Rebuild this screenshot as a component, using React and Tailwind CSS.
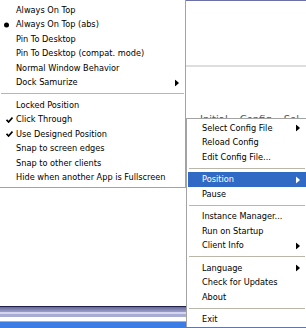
import React from 'react';

const Arrow = () => (
    <svg width="4" height="7" viewBox="0 0 4 7" className="absolute right-[6px] top-1/2 -translate-y-1/2">
        <path d="M0 0 L4 3.5 L0 7 Z" fill="currentColor" />
    </svg>
);

const Check = () => (
    <svg width="7" height="7" viewBox="0 0 7 7" className="absolute left-[6px] top-1/2 -translate-y-1/2">
        <path d="M0.5 3.2 L2.6 5.5 L6.5 1" fill="none" stroke="#000" strokeWidth="1.7" />
    </svg>
);

const Bullet = () => (
    <span className="absolute left-[4px] top-1/2 h-[5px] w-[5px] -translate-y-1/2 rounded-full bg-black" />
);

const Item = ({ label, mark, sub, active, pl = 'pl-[16px]' }) => (
    <div className={`relative flex h-[14.5px] items-center ${pl} leading-none ${active ? 'bg-[#316ac5] text-white' : 'text-black'}`}>
        {mark === 'bullet' && <Bullet />}
        {mark === 'check' && <Check />}
        <span className="whitespace-nowrap">{label}</span>
        {sub && <Arrow />}
    </div>
);

const Sep = () => (
    <div className="flex h-[8px] items-center px-[1px]">
        <div className="h-px w-full bg-[#b9b6aa]" />
    </div>
);

const firstGroup = [
    { label: 'Always On Top' },
    { label: 'Always On Top (abs)', mark: 'bullet' },
    { label: 'Pin To Desktop' },
    { label: 'Pin To Desktop (compat. mode)' },
    { label: 'Normal Window Behavior' },
    { label: 'Dock Samurize', sub: true },
];

const secondGroup = [
    { label: 'Locked Position' },
    { label: 'Click Through', mark: 'check' },
    { label: 'Use Designed Position', mark: 'check' },
    { label: 'Snap to screen edges' },
    { label: 'Snap to other clients' },
    { label: 'Hide when another App is Fullscreen' },
];

const mainMenu = [
    [{ label: 'Select Config File', sub: true }, { label: 'Reload Config' }, { label: 'Edit Config File...' }],
    [{ label: 'Position', sub: true, active: true }, { label: 'Pause' }],
    [{ label: 'Instance Manager...' }, { label: 'Run on Startup' }, { label: 'Client Info', sub: true }],
    [{ label: 'Language', sub: true }, { label: 'Check for Updates' }, { label: 'About' }],
    [{ label: 'Exit' }],
];

export default function App() {
    return (
        <div className="relative h-[328px] w-[306px] overflow-hidden bg-white text-[8.2px] font-['DejaVu_Sans',sans-serif]">
            {/* window behind the menus */}
            <div className="flex h-full flex-col">
                <div className="h-px bg-[#6c70aa]" />
                <div className="h-[64px]" />
                <div className="h-[2px] bg-[#dedede]" />
                <div className="h-[48px]" />
                <div className="flex h-[12px] gap-[12px] pl-[200px] text-[10px] leading-none text-[#555]">
                    <span>Initial</span>
                    <span>Config</span>
                    <span>Sel</span>
                </div>
                <div className="flex-1" />
                <div className="h-px bg-[#20204a]" />
                <div className="h-[5px] bg-gradient-to-b from-[#666a98] to-[#9ca0c8]" />
                <div className="h-[2px] bg-[#d2d6f0]" />
                <div className="h-[3px] bg-[#a8acd2]" />
                <div className="h-[4px] bg-white" />
                <div className="h-px bg-[#8cb4f0]" />
                <div className="h-[6px] bg-[#3b7de4]" />
            </div>

            {/* position submenu */}
            <div className="absolute left-0 top-0 w-[186px] border-b border-r border-[#a3a3a3] bg-white pb-[2.25px] pt-[2.75px]">
                {firstGroup.map((it) => (
                    <Item key={it.label} {...it} />
                ))}
                <Sep />
                {secondGroup.map((it) => (
                    <Item key={it.label} {...it} />
                ))}
            </div>

            {/* tray menu */}
            <div className="absolute left-[186px] top-[118px] w-[121px] border-l border-t border-[#a3a3a3] bg-white px-[1px] pt-[1.75px]">
                {mainMenu.map((group, i) => (
                    <div key={i}>
                        {i > 0 && <Sep />}
                        {group.map((it) => (
                            <Item key={it.label} {...it} pl="pl-[14px]" />
                        ))}
                    </div>
                ))}
            </div>
        </div>
    );
}
